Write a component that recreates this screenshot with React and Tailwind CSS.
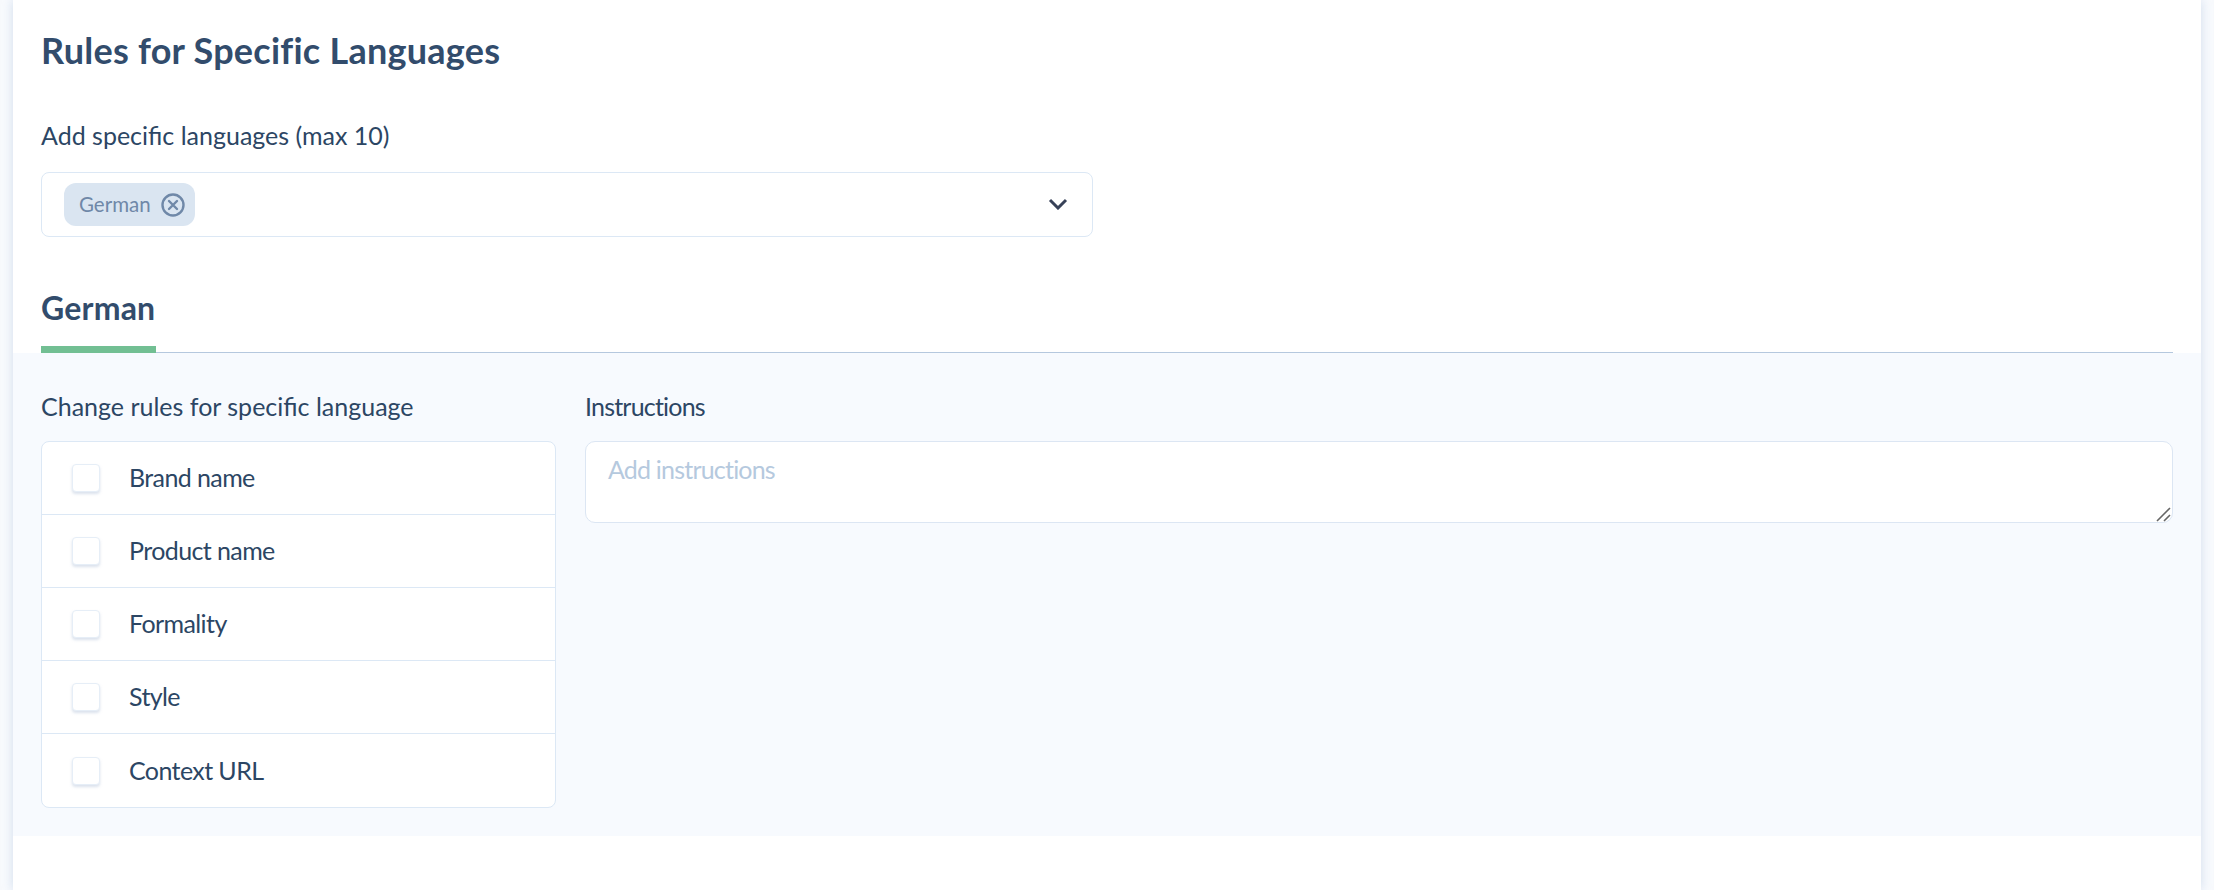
import React from "react";

const rules = ["Brand name", "Product name", "Formality", "Style", "Context URL"];

const App = () => {
  return (
    <div className="h-[890px] w-full overflow-hidden bg-[#f8fafd] px-[13px] font-['Lato',sans-serif] text-[#2c4664]">
      <div className="h-full bg-white shadow-[0_0_10px_rgba(176,196,224,0.55)]">
        {/* Top part */}
        <div className="px-[28px] pt-[27px]">
          <h1 className="h-[46px] text-[36px] leading-[46px] font-bold tracking-[0.25px] text-[#324c6c]">
            Rules for Specific Languages
          </h1>
          <div className="mt-[47px] h-[30px] text-[25px] leading-[30px]">
            Add specific languages (max 10)
          </div>
          <div className="mt-[22px] flex h-[65px] w-[1052px] items-center justify-between rounded-[8px] border border-[#dce8f5] pr-[24px] pl-[22px]">
            <div className="flex h-[43px] items-center gap-[10px] rounded-[12px] bg-[#dae5f1] pr-[10px] pl-[15px] text-[20.5px] text-[#6f88a8]">
              German
              <svg width="24" height="24" viewBox="0 0 24 24" fill="none" stroke="#6f88a8" strokeWidth="2.4" strokeLinecap="round">
                <circle cx="12" cy="12" r="10.5" />
                <path d="M8 8l8 8M16 8l-8 8" />
              </svg>
            </div>
            <svg className="mb-[2px]" width="20" height="12" viewBox="0 0 20 12" fill="none" stroke="#374158" strokeWidth="3">
              <path d="M2 2l8 8 8-8" />
            </svg>
          </div>
          <div className="mt-[45px] flex h-[71px] border-b border-[#b5c8de]">
            <div className="h-[71px] w-[115px] border-b-[7px] border-[#72bf93] pt-[6px] text-[32px] leading-[40px] font-bold tracking-[0.2px] text-[#324c6c]">
              German
            </div>
          </div>
        </div>

        {/* Language rules */}
        <div className="flex h-[483px] gap-[29px] bg-[#f7fafe] px-[28px] pt-[37px]">
          <div className="w-[515px]">
            <div className="h-[32px] text-[25px] leading-[32px]">
              Change rules for specific language
            </div>
            <div className="mt-[19px] overflow-hidden rounded-[8px] border border-[#dce8f5] bg-white">
              {rules.map((rule) => (
                <label
                  key={rule}
                  className="flex h-[73px] items-center gap-[29px] border-b border-[#dce8f5] pl-[30px] text-[25px] tracking-[-0.6px] last:border-b-0"
                >
                  <span className="h-[28px] w-[28px] rounded-[4px] border border-[#e6eef7] bg-white shadow-[0_2px_3px_rgba(150,170,200,0.35)]" />
                  {rule}
                </label>
              ))}
            </div>
          </div>
          <div className="flex-1">
            <div className="h-[32px] text-[25px] leading-[32px] tracking-[-0.8px]">Instructions</div>
            <div className="relative mt-[19px]">
              <textarea
                placeholder="Add instructions"
                className="block h-[82px] w-full resize-none rounded-[10px] border border-[#dce6f3] bg-white px-[22px] py-[11px] text-[25px] leading-[32px] tracking-[-0.8px] outline-none placeholder:text-[#b5c9de]"
              />
              {/* resize grip */}
              <svg className="absolute right-[2px] bottom-[1px]" width="15" height="15" viewBox="0 0 15 15" stroke="#666" strokeWidth="1.6">
                <path d="M1 14L14 1M8 14l6-6" />
              </svg>
            </div>
          </div>
        </div>
      </div>
    </div>
  );
};

export default App;
